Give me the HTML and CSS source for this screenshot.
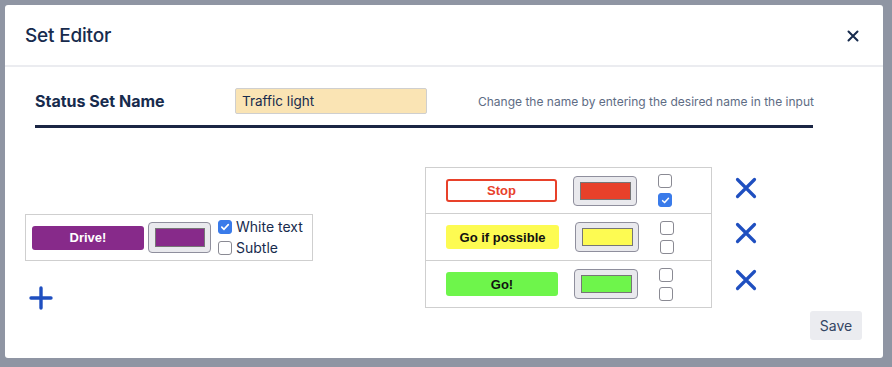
FILE: index.html
```html
<!DOCTYPE html>
<html>
<head>
<meta charset="utf-8">
<link rel="stylesheet" href="styles.css">
</head>
<body>
<div class="modal">
  <div class="header">
    <h1 class="title">Set Editor</h1>
    <svg class="close" width="12" height="12" viewBox="0 0 12 12"><path d="M1.5 1.5 L10.5 10.5 M10.5 1.5 L1.5 10.5" stroke="#172b4d" stroke-width="2" stroke-linecap="round"/></svg>
  </div>
  <div class="body">
    <div class="name-row">
      <div class="name-label">Status Set Name</div>
      <input class="name-input" type="text" value="Traffic light">
      <div class="help">Change the name by entering the desired name in the input</div>
    </div>
    <div class="rule"></div>
    <div class="content">
      <div class="left">
        <div class="new-box">
          <div class="pill purple">Drive!</div>
          <div class="swatch"><div class="swatch-in" style="background:#872a8a"></div></div>
          <div class="opts">
            <label class="opt"><span class="cb checked"><svg width="10" height="10" viewBox="0 0 10 10"><path d="M1.8 5.2 L4 7.3 L8.3 2.6" fill="none" stroke="#fff" stroke-width="1.7" stroke-linecap="round" stroke-linejoin="round"/></svg></span>White text</label>
            <label class="opt"><span class="cb"></span>Subtle</label>
          </div>
        </div>
        <svg class="plus" width="24" height="24" viewBox="0 0 24 24"><path d="M12 2 V22 M2 12 H22" stroke="#1f4fc0" stroke-width="3.4" stroke-linecap="round"/></svg>
      </div>
      <div class="table">
        <div class="row">
          <div class="pill stop">Stop</div>
          <div class="swatch"><div class="swatch-in" style="background:#e8412a"></div></div>
          <div class="cbs">
            <span class="cb sm"></span>
            <span class="cb sm checked"><svg width="9" height="9" viewBox="0 0 10 10"><path d="M1.8 5.2 L4 7.3 L8.3 2.6" fill="none" stroke="#fff" stroke-width="1.7" stroke-linecap="round" stroke-linejoin="round"/></svg></span>
          </div>
        </div>
        <div class="row">
          <div class="pill yellow">Go if possible</div>
          <div class="swatch"><div class="swatch-in" style="background:#fdfb52"></div></div>
          <div class="cbs">
            <span class="cb sm"></span>
            <span class="cb sm"></span>
          </div>
        </div>
        <div class="row last">
          <div class="pill green">Go!</div>
          <div class="swatch"><div class="swatch-in" style="background:#6ef54b"></div></div>
          <div class="cbs">
            <span class="cb sm"></span>
            <span class="cb sm"></span>
          </div>
        </div>
      </div>
      <div class="dels">
        <div class="del"><svg width="22" height="22" viewBox="0 0 22 22"><path d="M2.5 2.5 L19.5 19.5 M19.5 2.5 L2.5 19.5" stroke="#1f4fc0" stroke-width="3.2" stroke-linecap="round"/></svg></div>
        <div class="del"><svg width="22" height="22" viewBox="0 0 22 22"><path d="M2.5 2.5 L19.5 19.5 M19.5 2.5 L2.5 19.5" stroke="#1f4fc0" stroke-width="3.2" stroke-linecap="round"/></svg></div>
        <div class="del"><svg width="22" height="22" viewBox="0 0 22 22"><path d="M2.5 2.5 L19.5 19.5 M19.5 2.5 L2.5 19.5" stroke="#1f4fc0" stroke-width="3.2" stroke-linecap="round"/></svg></div>
      </div>
    </div>
    <div class="footer">
      <button class="save">Save</button>
    </div>
  </div>
</div>
</body>
</html>
```
FILE: styles.css
```css
* { box-sizing: border-box; }
html, body { margin: 0; height: 100%; }
body {
  background: #8f95a3;
  padding: 5px 9px 9px 5px;
  font-family: Inter, "Noto Sans", "Liberation Sans", sans-serif;
  color: #172b4d;
}
.modal {
  width: 878px;
  height: 353px;
  background: #fff;
  border-radius: 3px;
  overflow: hidden;
}
.header {
  height: 62px;
  border-bottom: 2px solid #ebecf0;
  display: flex;
  align-items: center;
  justify-content: space-between;
  padding: 0 24px 0 20px;
}
.title {
  margin: 0;
  font-size: 19px;
  font-weight: 500;
  color: #172b4d;
  letter-spacing: -0.2px;
}
.close { margin-top: 2px; }
.body { padding: 21px 20px 0 20px; }
.name-row {
  display: flex;
  align-items: center;
  height: 26px;
  padding-left: 10px;
}
.name-label {
  width: 200px;
  font-size: 16px;
  font-weight: 700;
  color: #172b4d;
}
.name-input {
  width: 192px;
  height: 26px;
  background: #fae4b4;
  border: 1px solid #cfcfcf;
  border-radius: 2px;
  font-family: Inter, "Noto Sans", sans-serif;
  font-size: 13.5px;
  color: #172b4d;
  padding: 0 6px;
  outline: none;
}
.help {
  margin-left: 51px;
  font-size: 12px;
  color: #5e6c84;
}
.rule {
  margin: 11px 0 0 10px;
  width: 778px;
  height: 3px;
  background: #1b2644;
}
.content {
  display: flex;
  align-items: flex-start;
  margin-top: 39px;
}
.left {
  width: 288px;
  margin-top: 47px;
}
.new-box {
  height: 47px;
  border: 1px solid #cfcfcf;
  display: flex;
  align-items: center;
  padding-left: 6px;
}
.pill {
  width: 112px;
  height: 24px;
  border-radius: 3px;
  display: flex;
  align-items: center;
  justify-content: center;
  font-family: "Liberation Sans", Arial, sans-serif;
  font-weight: 700;
  font-size: 13px;
}
.purple { background: #872a8a; color: #fff; }
.stop { background: #fff; color: #e8412a; border: 2px solid #e8412a; width: 111px; height: 23px; }
.yellow { background: #fdfb52; color: #111; width: 113px; }
.green { background: #6ef54b; color: #111; }
.swatch {
  width: 63px;
  height: 31px;
  background: #e9e9ed;
  border: 1px solid #8f8f9d;
  border-radius: 4px;
  padding: 5px 5px 5px 6px;
  margin-left: 4px;
}
.swatch-in {
  width: 100%;
  height: 100%;
  border: 1px solid #767676;
}
.opts {
  display: flex;
  flex-direction: column;
  gap: 7px;
  margin-left: 7px;
}
.opt {
  display: flex;
  align-items: center;
  font-size: 14px;
  line-height: 14px;
  color: #172b4d;
}
.cb {
  width: 14px;
  height: 14px;
  border: 1.5px solid #8a8a93;
  border-radius: 3px;
  margin-right: 4px;
  display: inline-flex;
  align-items: center;
  justify-content: center;
  background: #fff;
}
.cb.checked { background: #3a7bea; border-color: #3a7bea; }
.cb.sm { width: 14px; height: 14px; margin: 0; }
.plus { display: block; margin: 25px 0 0 4px; }
.table {
  margin-left: 112px;
  width: 287px;
  border: 1px solid #cfcfcf;
}
.row {
  height: 47px;
  border-bottom: 1px solid #cfcfcf;
  display: flex;
  align-items: center;
  padding-left: 20px;
}
.row:first-child { height: 46px; }
.row.last { border-bottom: none; height: 46px; }
.row .swatch { width: 64px; height: 30px; margin-left: 16px; }
.cbs {
  display: flex;
  flex-direction: column;
  gap: 5px;
  margin-left: 21px;
}
.dels { margin-left: 23px; }
.del {
  height: 47px;
  display: flex;
  align-items: center;
}
.del:first-child { height: 42px; }
.footer {
  display: flex;
  justify-content: flex-end;
  margin-top: 1px;
  padding-right: 1px;
}
.save {
  width: 52px;
  height: 29px;
  background: #ebecf0;
  border: none;
  border-radius: 3px;
  font-family: Inter, "Noto Sans", sans-serif;
  font-size: 14px;
  color: #344563;
  padding: 0;
}
```
